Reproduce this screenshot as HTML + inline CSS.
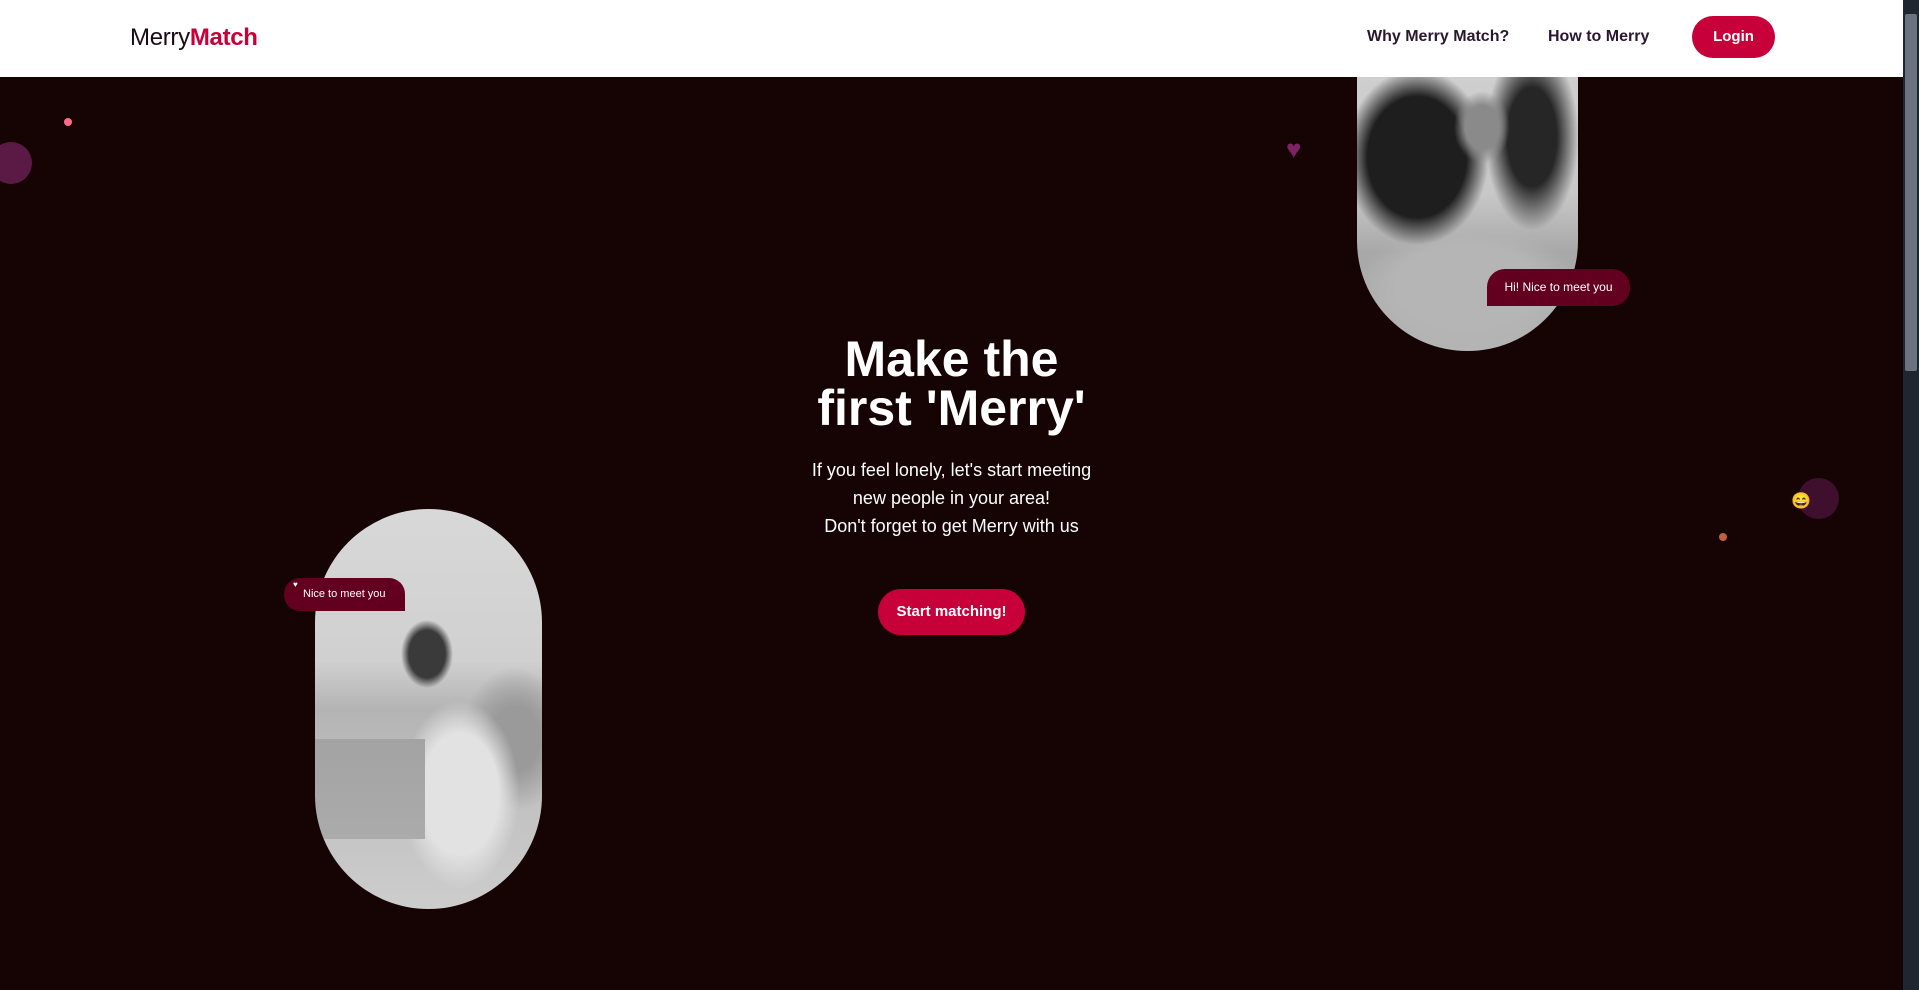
<!DOCTYPE html>
<html><head><meta charset="utf-8"><style>
*{margin:0;padding:0;box-sizing:border-box}
html,body{width:1919px;height:990px;overflow:hidden;background:#160304;font-family:"Liberation Sans",sans-serif}
.nav{position:absolute;left:0;top:0;width:1903px;height:77px;background:#fff}
.logo{position:absolute;left:130px;top:24px;font-size:24px;color:#1a0a12;letter-spacing:-0.3px}
.logo b{color:#c70039}
.link{position:absolute;top:28px;font-size:16px;font-weight:bold;color:#2a1630}
.login{position:absolute;left:1692px;top:16px;width:83px;height:42px;border-radius:21px;background:#c70039;color:#fff;font-size:15px;font-weight:bold;text-align:center;line-height:42px}
.hero{position:absolute;left:0;top:77px;width:1903px;height:913px;background:#160304;overflow:hidden}
h1{position:absolute;left:0;width:1903px;text-align:center;top:258px;color:#fff;font-size:50px;line-height:49px;font-weight:bold}
p.sub{position:absolute;left:0;width:1903px;text-align:center;top:379px;color:#fff;font-size:18px;line-height:28px}
.start{position:absolute;left:878px;top:512px;width:147px;height:46px;border-radius:23px;background:#c70039;color:#fff;font-size:15px;font-weight:bold;text-align:center;line-height:46px}
.photoR{position:absolute;left:1357px;top:-120px;width:221px;height:394px;border-radius:0 0 110px 110px;overflow:hidden;
background:
radial-gradient(ellipse 28px 36px at 125px 170px,#8a8a8a 60%,transparent 100%),
radial-gradient(ellipse 90px 110px at 60px 200px,#1e1e1e 55%,transparent 80%),
radial-gradient(ellipse 55px 110px at 175px 180px,#262626 45%,transparent 85%),
radial-gradient(ellipse 120px 70px at 110px 330px,#b5b5b5 60%,transparent 90%),
linear-gradient(180deg,#d6d6d6 0%,#c8c8c8 60%,#a8a8a8 75%,#b4b4b4 100%)}
.photoL{position:absolute;left:315px;top:432px;width:227px;height:400px;border-radius:114px;overflow:hidden;
background:
radial-gradient(ellipse 26px 34px at 112px 145px,#3a3a3a 70%,transparent 100%),
linear-gradient(180deg,transparent 0,transparent 230px,#a3a3a3 230px,#ababab 330px,transparent 330px) 0 0/110px 400px no-repeat,
radial-gradient(ellipse 70px 110px at 145px 285px,#e2e2e2 55%,transparent 85%),
radial-gradient(ellipse 60px 80px at 200px 230px,#9a9a9a 40%,transparent 90%),
linear-gradient(180deg,#d8d8d8 0%,#d0d0d0 38%,#b4b4b4 50%,#c0c0c0 70%,#cdcdcd 100%)}
.bub{position:absolute;background:#64001f;color:#fff;font-size:12px}
.dot{position:absolute;border-radius:50%}
.sb{position:absolute;left:1903px;top:0;width:16px;height:990px;background:#202630}
.thumb{position:absolute;left:1905px;top:14px;width:12px;height:357px;background:#6b7380;border-radius:2px}
</style></head><body>
<div class="nav">
<div class="logo">Merry<b>Match</b></div>
<div class="link" style="left:1367px">Why Merry Match?</div>
<div class="link" style="left:1548px">How to Merry</div>
<div class="login">Login</div>
</div>
<div class="hero">
<div class="dot" style="left:64px;top:41px;width:8px;height:8px;background:#ff6b8b"></div>
<div class="dot" style="left:-10px;top:65px;width:42px;height:42px;background:#5a1a45"></div>
<div style="position:absolute;left:1286px;top:59px;color:#7c2363;font-size:26px;line-height:26px">&#9829;</div>
<div class="dot" style="left:1798px;top:401px;width:41px;height:41px;background:#3f0f2e"></div>
<div style="position:absolute;left:1791px;top:414px;font-size:16px">😄</div>
<div class="dot" style="left:1719px;top:456px;width:8px;height:8px;background:#c0603a"></div>
<div class="photoR"></div>
<div class="bub" style="left:1487px;top:192px;width:143px;height:37px;border-radius:18px 18px 18px 0;line-height:37px;text-align:center">Hi! Nice to meet you</div>
<h1>Make the<br>first 'Merry'</h1>
<p class="sub">If you feel lonely, let's start meeting<br>new people in your area!<br>Don't forget to get Merry with us</p>
<div class="start">Start matching!</div>
<div class="photoL"></div>
<div class="bub" style="left:284px;top:501px;width:121px;height:33px;border-radius:16px 16px 0 16px;line-height:33px;padding-left:19px;font-size:11px"><span style="position:absolute;left:9px;top:-10px;font-size:8px">&#9829;</span>Nice to meet you</div>
</div>
<div class="sb"></div><div class="thumb"></div>
</body></html>
